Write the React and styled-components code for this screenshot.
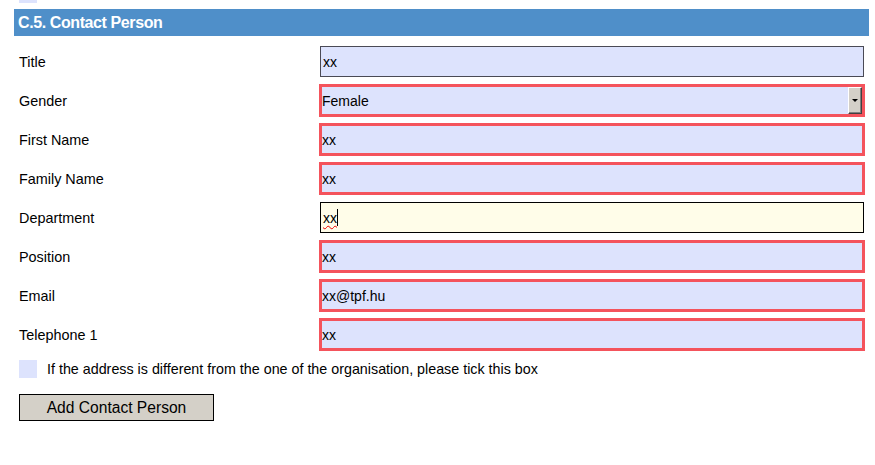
import React from 'react';
import styled, { createGlobalStyle } from 'styled-components';

const Global = createGlobalStyle`
  body {
    margin: 0;
    background: #fff;
    font-family: "Liberation Sans", Arial, sans-serif;
    color: #000;
  }
`;

const Page = styled.div`
  width: 875px;
  height: 465px;
  padding: 0 6px 0 14px;
  box-sizing: border-box;
  overflow: hidden;
`;

const CutBox = styled.div`
  width: 18px;
  height: 3px;
  margin-left: 5px;
  background: #dde3fd;
`;

const Header = styled.div`
  margin-top: 6px;
  height: 27px;
  background: #4f8fc9;
  color: #fff;
  font-weight: bold;
  font-size: 16px;
  display: flex;
  align-items: center;
  padding-left: 4px;
  letter-spacing: -0.4px;
`;

const Rows = styled.div`
  margin-top: 6px;
  display: flex;
  flex-direction: column;
`;

const Row = styled.div`
  height: 39px;
  display: grid;
  grid-template-columns: 305px 1fr;
  align-items: center;
`;

const Label = styled.div`
  padding-left: 5px;
  font-size: 14.4px;
`;

const Field = styled.div`
  position: relative;
  box-sizing: border-box;
  height: ${p => (p.$required ? '33px' : '31px')};
  margin: ${p => (p.$required ? '0 4px 0 0' : '0 5px 0 1px')};
  border: ${p => (p.$required ? '3px solid #f4535c' : p.$focus ? '1px solid #000' : '1px solid #4a4a55')};
  background: ${p => (p.$focus ? '#fffde9' : '#dde3fd')};
  display: flex;
  align-items: center;
  padding-left: ${p => (p.$required ? '0' : '2px')};
  font-size: 14px;
`;

const Value = styled.span`
  padding-top: 1px;
  ${p => p.$typo && `
    text-decoration: underline wavy #e00;
    text-decoration-thickness: 1px;
    text-underline-offset: 2px;
    border-right: 1px solid #000;
  `}
`;

const DropButton = styled.div`
  position: absolute;
  right: 0;
  top: 0;
  bottom: 0;
  width: 14px;
  box-sizing: border-box;
  background: #d4d0c8;
  border: 1px solid;
  border-color: #fff #404040 #404040 #fff;
  box-shadow: inset -1px -1px 0 #808080;
  display: flex;
  align-items: center;
  justify-content: center;
`;

const Arrow = styled.div`
  width: 0;
  height: 0;
  border-left: 3px solid transparent;
  border-right: 3px solid transparent;
  border-top: 3px solid #000;
`;

const CheckRow = styled.div`
  margin-top: 6px;
  display: flex;
  align-items: center;
  gap: 10px;
  padding-left: 5px;
  font-size: 14.3px;
`;

const Box = styled.div`
  width: 18px;
  height: 18px;
  background: #dde3fd;
`;

const AddButton = styled.button`
  margin: 16px 0 0 5px;
  width: 195px;
  height: 27px;
  background: #d4d0c8;
  border: 1px solid #000;
  font-family: "Liberation Sans", Arial, sans-serif;
  font-size: 15.6px;
  color: #000;
  padding: 0;
`;

const fields = [
  { label: 'Title', value: 'xx' },
  { label: 'Gender', value: 'Female', required: true, select: true },
  { label: 'First Name', value: 'xx', required: true },
  { label: 'Family Name', value: 'xx', required: true },
  { label: 'Department', value: 'xx', focus: true },
  { label: 'Position', value: 'xx', required: true },
  { label: 'Email', value: 'xx@tpf.hu', required: true },
  { label: 'Telephone 1', value: 'xx', required: true },
];

export default function App() {
  return (
    <>
      <Global />
      <Page>
        <CutBox />
        <Header>C.5. Contact Person</Header>
        <Rows>
          {fields.map(f => (
            <Row key={f.label}>
              <Label>{f.label}</Label>
              <Field $required={f.required} $focus={f.focus}>
                <Value $typo={f.focus}>{f.value}</Value>
                {f.select && (
                  <DropButton>
                    <Arrow />
                  </DropButton>
                )}
              </Field>
            </Row>
          ))}
        </Rows>
        <CheckRow>
          <Box />
          <span>If the address is different from the one of the organisation, please tick this box</span>
        </CheckRow>
        <AddButton>Add Contact Person</AddButton>
      </Page>
    </>
  );
}
